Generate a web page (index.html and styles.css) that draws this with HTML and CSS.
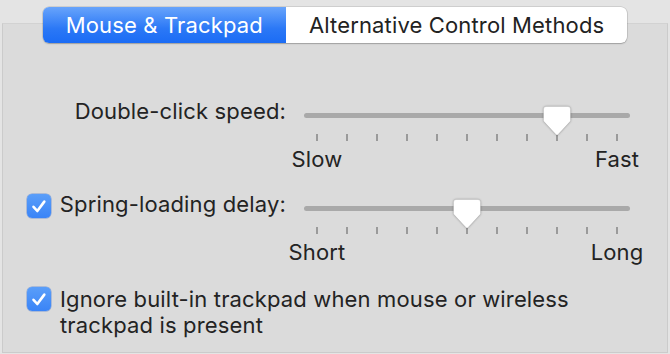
FILE: index.html
```html
<!DOCTYPE html>
<html>
<head>
<meta charset="utf-8">
<link rel="stylesheet" href="styles.css">
</head>
<body>
<div class="window">
  <div class="box">
    <div class="tabs">
      <div class="seg seg-active">Mouse &amp; Trackpad</div>
      <div class="seg">Alternative Control Methods</div>
    </div>
    <div class="settings">
      <div class="grid">
        <div class="label">Double-click speed:</div>
        <div class="slider">
          <div class="rail">
            <div class="track"></div>
            <svg class="knob" style="left:239px" width="28" height="31" viewBox="0 0 28 31"><path d="M3.5,0.5 H24.5 Q27.5,0.5 27.5,3.5 V15 L15,28.5 Q14,29.5 13,28.5 L0.5,15 V3.5 Q0.5,0.5 3.5,0.5 Z"/></svg>
          </div>
          <div class="ticks"><i></i><i></i><i></i><i></i><i></i><i></i><i></i><i></i><i></i><i></i><i></i></div>
          <div class="scale"><span>Slow</span><span>Fast</span></div>
        </div>

        <div class="label label-check">
          <span class="check"><svg width="24" height="24" viewBox="0 0 24 24"><path d="M6.5,12.8 L10.3,17 L17.3,7.6"/></svg></span>
          <span>Spring-loading delay:</span>
        </div>
        <div class="slider">
          <div class="rail">
            <div class="track"></div>
            <svg class="knob" style="left:149px" width="28" height="31" viewBox="0 0 28 31"><path d="M3.5,0.5 H24.5 Q27.5,0.5 27.5,3.5 V15 L15,28.5 Q14,29.5 13,28.5 L0.5,15 V3.5 Q0.5,0.5 3.5,0.5 Z"/></svg>
          </div>
          <div class="ticks"><i></i><i></i><i></i><i></i><i></i><i></i><i></i><i></i><i></i><i></i><i></i></div>
          <div class="scale"><span>Short</span><span>Long</span></div>
        </div>
      </div>

      <div class="option">
        <span class="check"><svg width="24" height="24" viewBox="0 0 24 24"><path d="M6.5,12.8 L10.3,17 L17.3,7.6"/></svg></span>
        <span class="option-text">Ignore built-in trackpad when mouse or wireless trackpad is present</span>
      </div>
    </div>
  </div>
</div>
</body>
</html>
```

FILE: styles.css
```css
html, body {
  margin: 0;
  padding: 0;
}
body {
  width: 670px;
  height: 354px;
  overflow: hidden;
  font-family: "Inter", "Liberation Sans", sans-serif;
  color: #232323;
}
.window {
  width: 670px;
  height: 354px;
  box-sizing: border-box;
  padding: 23px 2px 1px 2px;
  background: #e4e4e4;
}
.box {
  height: 100%;
  box-sizing: border-box;
  border: 1px solid #cbcbcb;
  border-top-color: #d2d2d2;
  background: #dbdbdb;
  display: flex;
  flex-direction: column;
}
.tabs {
  align-self: center;
  margin-top: -17px;
  display: flex;
  height: 36px;
  border-radius: 6px;
  box-shadow: 0 0 0 0.5px rgba(0,0,0,0.18), 0 1px 1.5px rgba(0,0,0,0.2);
  background: #ffffff;
  font-size: 22px;
  letter-spacing: 0.15px;
}
.seg {
  display: flex;
  align-items: center;
  justify-content: center;
  padding: 0 23px;
  color: #222222;
}
.seg-active {
  color: #ffffff;
  border-radius: 6px 0 0 6px;
  background: linear-gradient(#68a4fb, #2b78f6 60%, #1b6cf5);
}
.settings {
  padding: 56px 0 0 24px;
  font-size: 22px;
  letter-spacing: 0.15px;
}
.grid {
  display: grid;
  grid-template-columns: 259px 326px;
  column-gap: 18px;
  row-gap: 21px;
}
.label {
  line-height: 24px;
  text-align: right;
}
.label-check {
  display: flex;
  justify-content: space-between;
  align-items: flex-start;
}
.check {
  display: block;
  flex: none;
  width: 24px;
  height: 24px;
  margin-top: 2px;
  border-radius: 5px;
  background: linear-gradient(#5a9ef9, #3a84f7);
  box-shadow: 0 0 0 0.5px rgba(30,90,200,0.5);
}
.check svg {
  display: block;
}
.check path {
  fill: none;
  stroke: #ffffff;
  stroke-width: 2.6;
  stroke-linecap: round;
  stroke-linejoin: round;
}
.slider {
  display: flex;
  flex-direction: column;
}
.rail {
  position: relative;
  height: 29px;
}
.track {
  margin-top: 14px;
  height: 5px;
  border-radius: 3px;
  background: #a9a9a9;
}
.knob {
  position: absolute;
  top: 7px;
  filter: drop-shadow(0 0.5px 1px rgba(0,0,0,0.35));
}
.knob path {
  fill: #ffffff;
  stroke: rgba(0,0,0,0.12);
  stroke-width: 0.5;
}
.ticks {
  margin-top: 6px;
  height: 7px;
  padding: 0 12px;
  display: flex;
  justify-content: space-between;
}
.ticks i {
  display: block;
  width: 2px;
  height: 7px;
  background: #9a9a9a;
}
.scale {
  margin: 6px -17px 0 -17px;
  display: flex;
  justify-content: space-between;
  line-height: 24px;
}
.scale span {
  width: 60px;
  text-align: center;
}
.option {
  margin-top: 22px;
  display: flex;
  align-items: flex-start;
  gap: 9px;
}
.option .check {
  margin-top: 1px;
}
.option-text {
  width: 540px;
  line-height: 26px;
}
```
